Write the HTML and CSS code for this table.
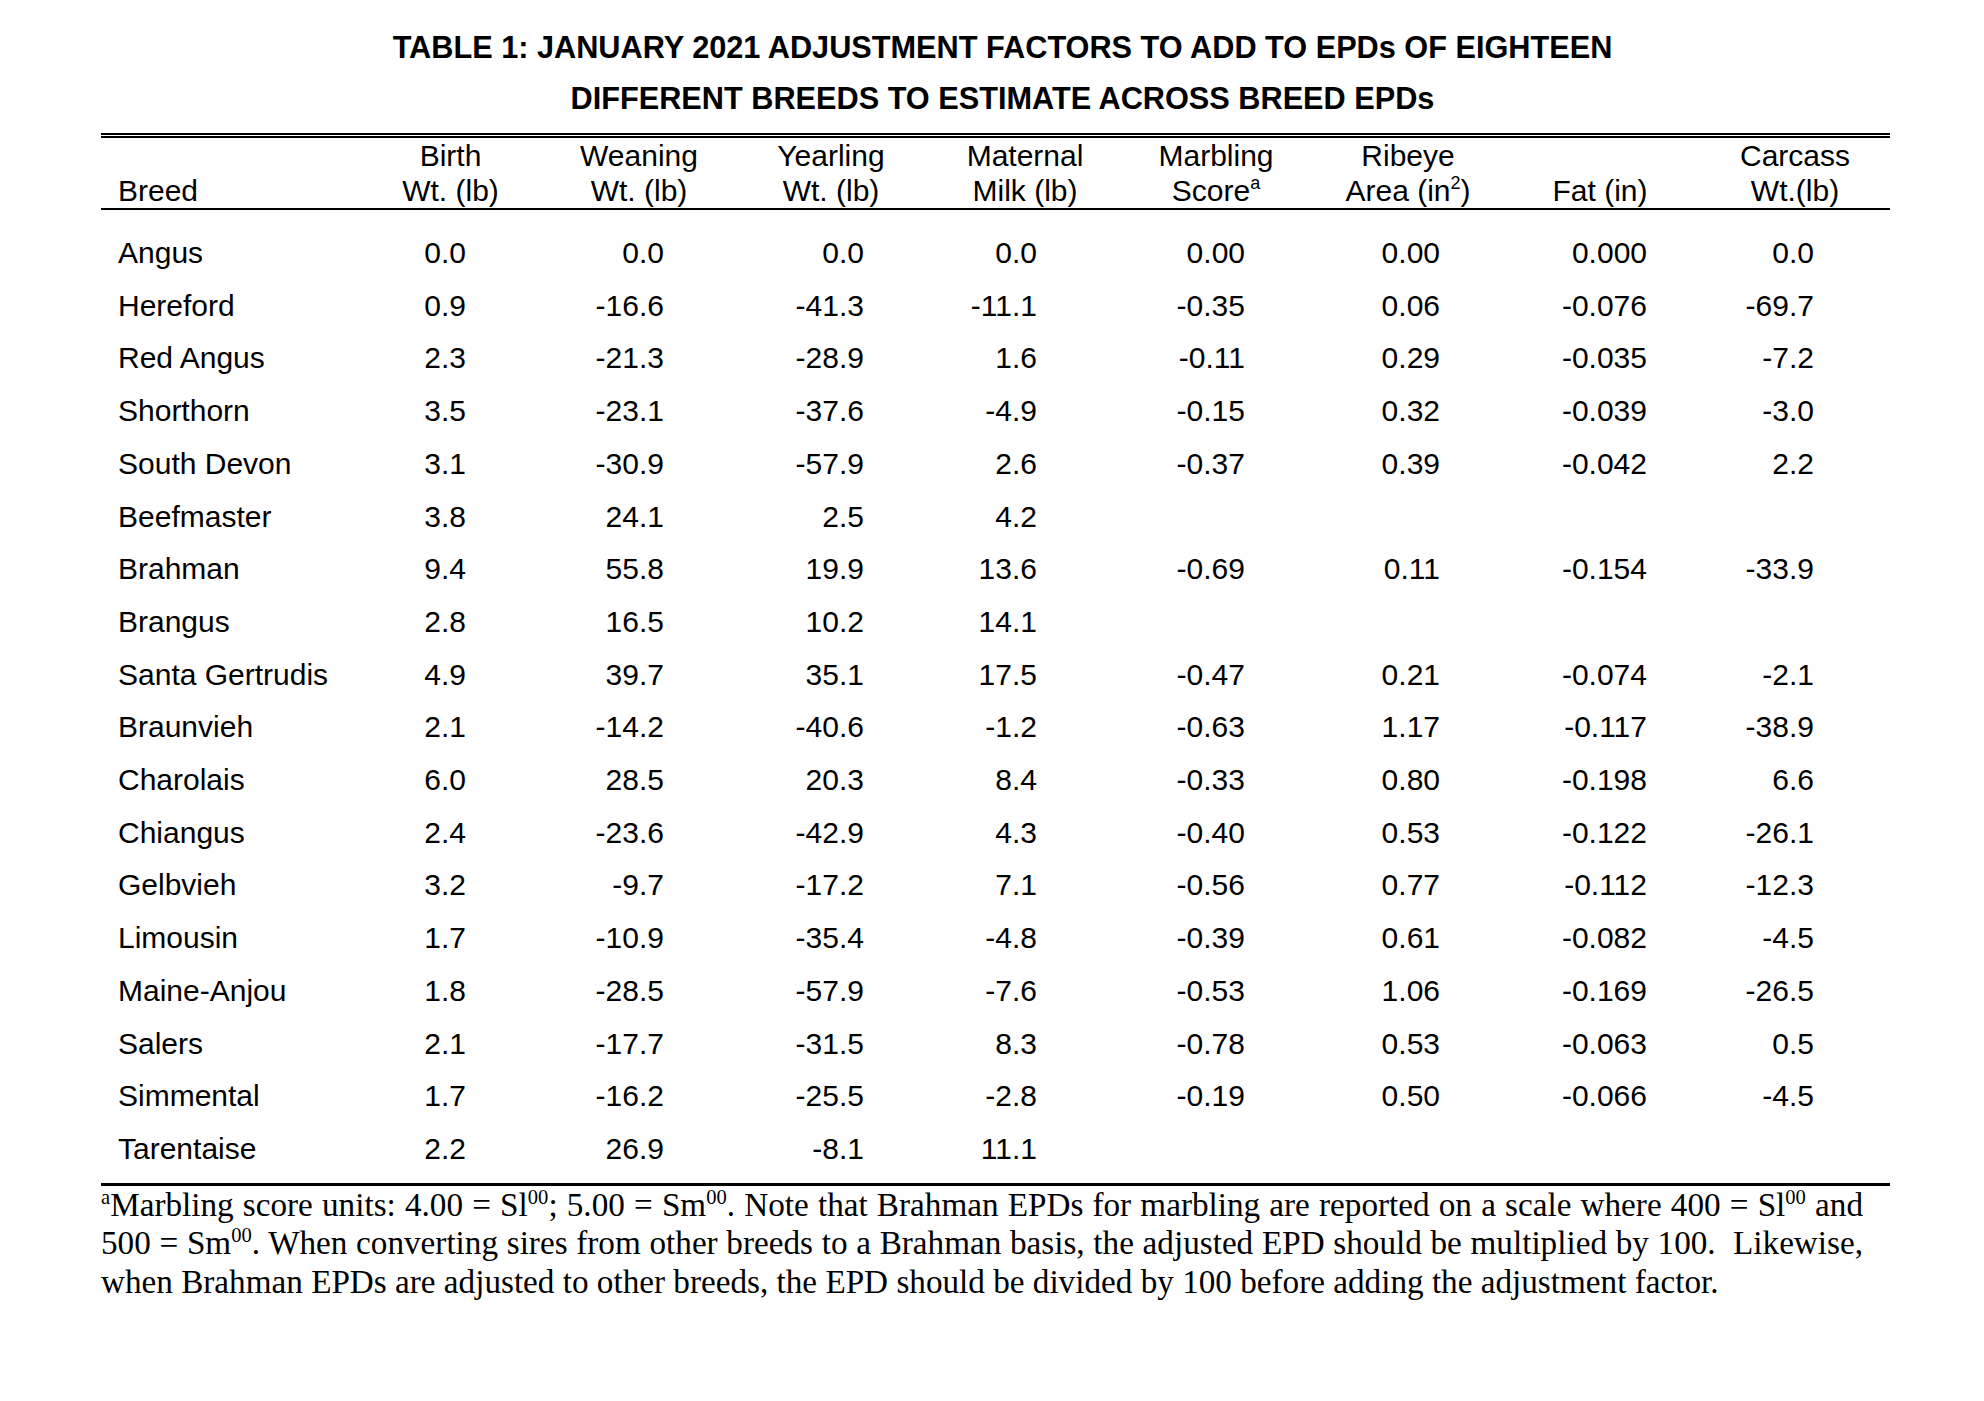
FILE: index.html
```html
<!DOCTYPE html>
<html lang="en">
<head>
<meta charset="utf-8">
<title>Table 1: January 2021 Adjustment Factors</title>
<link rel="stylesheet" href="styles.css">
</head>
<body>
<div class="page">
  <h1 class="title">
    <span class="title-line">TABLE 1: JANUARY 2021 ADJUSTMENT FACTORS TO ADD TO EPDs OF EIGHTEEN</span>
    <span class="title-line">DIFFERENT BREEDS TO ESTIMATE ACROSS BREED EPDs</span>
  </h1>
  <table class="epd">
    <colgroup>
      <col class="c-breed"><col class="c-birth"><col class="c-wean"><col class="c-year"><col class="c-milk"><col class="c-marb"><col class="c-rib"><col class="c-fat"><col class="c-carc">
    </colgroup>
    <thead>
      <tr>
        <th class="breed">Breed</th>
        <th class="h-birth">Birth<br>Wt. (lb)</th>
        <th>Weaning<br>Wt. (lb)</th>
        <th>Yearling<br>Wt. (lb)</th>
        <th>Maternal<br>Milk (lb)</th>
        <th>Marbling<br>Score<sup>a</sup></th>
        <th>Ribeye<br>Area (in<sup>2</sup>)</th>
        <th>Fat (in)</th>
        <th class="h-carc">Carcass<br>Wt.(lb)</th>
      </tr>
    </thead>
    <tbody>
      <tr><td>Angus</td><td>0.0</td><td>0.0</td><td>0.0</td><td>0.0</td><td>0.00</td><td>0.00</td><td>0.000</td><td>0.0</td></tr>
      <tr><td>Hereford</td><td>0.9</td><td>-16.6</td><td>-41.3</td><td>-11.1</td><td>-0.35</td><td>0.06</td><td>-0.076</td><td>-69.7</td></tr>
      <tr><td>Red Angus</td><td>2.3</td><td>-21.3</td><td>-28.9</td><td>1.6</td><td>-0.11</td><td>0.29</td><td>-0.035</td><td>-7.2</td></tr>
      <tr><td>Shorthorn</td><td>3.5</td><td>-23.1</td><td>-37.6</td><td>-4.9</td><td>-0.15</td><td>0.32</td><td>-0.039</td><td>-3.0</td></tr>
      <tr><td>South Devon</td><td>3.1</td><td>-30.9</td><td>-57.9</td><td>2.6</td><td>-0.37</td><td>0.39</td><td>-0.042</td><td>2.2</td></tr>
      <tr><td>Beefmaster</td><td>3.8</td><td>24.1</td><td>2.5</td><td>4.2</td><td></td><td></td><td></td><td></td></tr>
      <tr><td>Brahman</td><td>9.4</td><td>55.8</td><td>19.9</td><td>13.6</td><td>-0.69</td><td>0.11</td><td>-0.154</td><td>-33.9</td></tr>
      <tr><td>Brangus</td><td>2.8</td><td>16.5</td><td>10.2</td><td>14.1</td><td></td><td></td><td></td><td></td></tr>
      <tr><td>Santa Gertrudis</td><td>4.9</td><td>39.7</td><td>35.1</td><td>17.5</td><td>-0.47</td><td>0.21</td><td>-0.074</td><td>-2.1</td></tr>
      <tr><td>Braunvieh</td><td>2.1</td><td>-14.2</td><td>-40.6</td><td>-1.2</td><td>-0.63</td><td>1.17</td><td>-0.117</td><td>-38.9</td></tr>
      <tr><td>Charolais</td><td>6.0</td><td>28.5</td><td>20.3</td><td>8.4</td><td>-0.33</td><td>0.80</td><td>-0.198</td><td>6.6</td></tr>
      <tr><td>Chiangus</td><td>2.4</td><td>-23.6</td><td>-42.9</td><td>4.3</td><td>-0.40</td><td>0.53</td><td>-0.122</td><td>-26.1</td></tr>
      <tr><td>Gelbvieh</td><td>3.2</td><td>-9.7</td><td>-17.2</td><td>7.1</td><td>-0.56</td><td>0.77</td><td>-0.112</td><td>-12.3</td></tr>
      <tr><td>Limousin</td><td>1.7</td><td>-10.9</td><td>-35.4</td><td>-4.8</td><td>-0.39</td><td>0.61</td><td>-0.082</td><td>-4.5</td></tr>
      <tr><td>Maine-Anjou</td><td>1.8</td><td>-28.5</td><td>-57.9</td><td>-7.6</td><td>-0.53</td><td>1.06</td><td>-0.169</td><td>-26.5</td></tr>
      <tr><td>Salers</td><td>2.1</td><td>-17.7</td><td>-31.5</td><td>8.3</td><td>-0.78</td><td>0.53</td><td>-0.063</td><td>0.5</td></tr>
      <tr><td>Simmental</td><td>1.7</td><td>-16.2</td><td>-25.5</td><td>-2.8</td><td>-0.19</td><td>0.50</td><td>-0.066</td><td>-4.5</td></tr>
      <tr><td>Tarentaise</td><td>2.2</td><td>26.9</td><td>-8.1</td><td>11.1</td><td></td><td></td><td></td><td></td></tr>
    </tbody>
  </table>
  <p class="note">
    <span class="note-line justify"><sup>a</sup>Marbling score units: 4.00 = Sl<sup>00</sup>; 5.00 = Sm<sup>00</sup>. Note that Brahman EPDs for marbling are reported on a scale where 400 = Sl<sup>00</sup> and</span>
    <span class="note-line justify">500 = Sm<sup>00</sup>. When converting sires from other breeds to a Brahman basis, the adjusted EPD should be multiplied by 100.&nbsp; Likewise,</span>
    <span class="note-line">when Brahman EPDs are adjusted to other breeds, the EPD should be divided by 100 before adding the adjustment factor.</span>
  </p>
</div>
</body>
</html>
```

FILE: styles.css
```css
html, body {
  margin: 0;
  padding: 0;
  background: #ffffff;
  color: #000000;
}

.page {
  margin-left: 101px;
  width: 1789px;
  padding-top: 22px;
  font-family: "Liberation Sans", Arial, sans-serif;
}

.title {
  margin: 0 0 9px 0;
  padding-left: 14px;
  font-size: 30.7px;
  font-weight: bold;
  line-height: 51px;
  text-align: center;
}

.title-line {
  display: block;
}

.epd {
  width: 1789px;
  table-layout: fixed;
  border-collapse: collapse;
  border-top: 5px double #000;
  font-size: 30px;
}

.c-breed { width: 259px; }
.c-birth { width: 186px; }
.c-wean { width: 186px; }
.c-year { width: 198px; }
.c-milk { width: 190px; }
.c-marb { width: 192px; }
.c-rib { width: 192px; }
.c-fat { width: 192px; }
.c-carc { width: 194px; }

.epd th {
  font-weight: normal;
  line-height: 35px;
  padding: 0;
  vertical-align: bottom;
  text-align: center;
  border-bottom: 2px solid #000;
}

.epd th.breed {
  text-align: left;
  padding-left: 17px;
}

.epd th.h-birth {
  padding-right: 5px;
}

.epd th.h-carc {
  padding-left: 4px;
}

.epd sup {
  font-size: 0.6em;
  line-height: 0;
  vertical-align: 0.65em;
}

.epd td {
  line-height: 52.7px;
  padding: 0;
  text-align: right;
  white-space: nowrap;
}

.epd tbody tr:first-child td {
  padding-top: 17px;
}

.epd td:nth-child(1) { text-align: left; padding-left: 17px; }
.epd td:nth-child(2) { padding-right: 80px; }
.epd td:nth-child(3) { padding-right: 68px; }
.epd td:nth-child(4) { padding-right: 66px; }
.epd td:nth-child(5) { padding-right: 83px; }
.epd td:nth-child(6) { padding-right: 67px; }
.epd td:nth-child(7) { padding-right: 64px; }
.epd td:nth-child(8) { padding-right: 49px; }
.epd td:nth-child(9) { padding-right: 76px; }

.note {
  margin: 7px 0 0 0;
  padding-top: 0;
  border-top: 3px solid #000;
  font-family: "Liberation Serif", "Times New Roman", serif;
  font-size: 33.2px;
  line-height: 38.6px;
  width: 1789px;
}

.note-line {
  display: block;
  width: 1762px;
  text-align: left;
  white-space: nowrap;
}

.note-line.justify {
  text-align: justify;
  text-align-last: justify;
}

.note sup {
  font-size: 0.62em;
  line-height: 0;
  vertical-align: 0.6em;
}
```
